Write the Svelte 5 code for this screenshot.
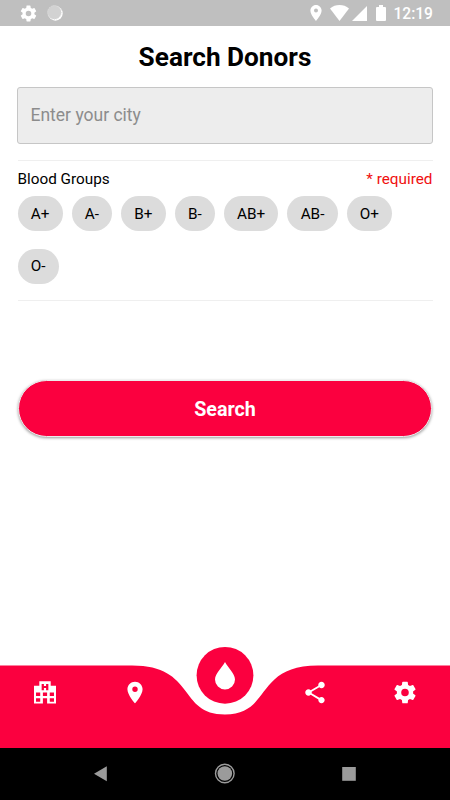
<script lang="ts">
	const gearPath =
		'M12 15.5A3.5 3.5 0 0 1 8.5 12 3.5 3.5 0 0 1 12 8.5a3.5 3.5 0 0 1 3.5 3.5 3.5 3.5 0 0 1-3.5 3.5m7.43-2.53c.04-.32.07-.64.07-.97s-.03-.66-.07-1l2.11-1.63c.19-.15.24-.42.12-.64l-2-3.46c-.12-.22-.39-.31-.61-.22l-2.49 1c-.52-.39-1.06-.73-1.69-.98l-.37-2.65A.506.506 0 0 0 14 2h-4c-.25 0-.46.18-.5.42l-.37 2.65c-.63.25-1.17.59-1.69.98l-2.49-1c-.22-.09-.49 0-.61.22l-2 3.46c-.13.22-.07.49.12.64L4.57 11c-.04.34-.07.67-.07 1s.03.65.07.97l-2.11 1.66c-.19.15-.25.42-.12.64l2 3.46c.12.22.39.3.61.22l2.49-1.01c.52.4 1.06.74 1.69.99l.37 2.65c.04.24.25.42.5.42h4c.25 0 .46-.18.5-.42l.37-2.65c.63-.26 1.17-.59 1.69-.99l2.49 1.01c.22.08.49 0 .61-.22l2-3.46c.12-.22.07-.49-.12-.64z';
	const pinPath =
		'M12 2C8.13 2 5 5.13 5 9c0 5.25 7 13 7 13s7-7.75 7-13c0-3.87-3.13-7-7-7zm0 9.5a2.5 2.5 0 0 1 0-5 2.5 2.5 0 0 1 0 5z';

	// Empty path leaves room for the floating middle button
	const tabs = [
		{
			label: 'Hospitals',
			path: 'M6.75 1.7h10.5v4h4.9v16.5h-8.2v-5h-3.9v5h-8.2V5.7h4.9zM8.9 4.1v5.8H11v-2h2v2h2.1V4.1H13v2h-2v-2zM3.7 12v3.2h3.9V12zm6.35 0v3.2h3.9V12zm6.35 0v3.2h3.9V12zM3.7 17.2v3.3h3.9v-3.3zm12.7 0v3.3h3.9v-3.3z'
		},
		{ label: 'Nearby', path: pinPath },
		{ label: 'Donors', path: '' },
		{
			label: 'Share',
			path: 'M18 16.08c-.76 0-1.44.3-1.96.77L8.91 12.7c.05-.23.09-.46.09-.7s-.04-.47-.09-.7l7.05-4.11c.54.5 1.25.81 2.04.81 1.66 0 3-1.34 3-3s-1.34-3-3-3-3 1.34-3 3c0 .24.04.47.09.7L8.04 9.81C7.5 9.31 6.79 9 6 9c-1.66 0-3 1.34-3 3s1.34 3 3 3c.79 0 1.5-.31 2.04-.81l7.12 4.16c-.05.21-.08.43-.08.65 0 1.61 1.31 2.92 2.92 2.92s2.92-1.31 2.92-2.92-1.31-2.92-2.92-2.92z'
		},
		{ label: 'Settings', path: gearPath }
	];

	const bloodGroups = ['A+', 'A-', 'B+', 'B-', 'AB+', 'AB-', 'O+', 'O-'];

	let city = $state('');
	let selected = $state('');
</script>

<div class="screen">
	<header class="status-bar">
		<div class="status-left">
			<svg class="status-gear" viewBox="0 0 24 24"><path d={gearPath} /></svg>
			<svg class="status-sync" viewBox="0 0 16 16">
				<circle cx="8.4" cy="8.4" r="7.3" />
				<circle class="disc" cx="7.4" cy="7.4" r="6.8" />
			</svg>
		</div>
		<div class="status-right">
			<svg class="status-pin" viewBox="5 2 14 20"><path d={pinPath} /></svg>
			<svg class="status-wifi" viewBox="0 0 19 16"><path d="M0 3.5C5.3-1.1 13.7-1.1 19 3.5L9.5 16z" /></svg>
			<svg class="status-signal" viewBox="0 0 15 15"><path d="M15 0v15H0z" /></svg>
			<svg class="status-battery" viewBox="0 0 10 16">
				<path d="M3 0h4v2h2a1 1 0 0 1 1 1v12a1 1 0 0 1-1 1H1a1 1 0 0 1-1-1V3a1 1 0 0 1 1-1h2z" />
			</svg>
			<span class="clock">12:19</span>
		</div>
	</header>

	<main>
		<h1>Search Donors</h1>
		<input class="city" type="text" placeholder="Enter your city" bind:value={city} />

		<section class="groups">
			<div class="groups-head">
				<span>Blood Groups</span>
				<span class="required">* required</span>
			</div>
			<div class="chips">
				{#each bloodGroups as group}
					<button class="chip" class:active={selected === group} onclick={() => (selected = group)}>
						{group}
					</button>
				{/each}
			</div>
		</section>

		<button class="search">Search</button>
	</main>

	<nav class="tab-bar">
		<svg class="wave" viewBox="0 0 450 108">
			<path
				class="wave-fill"
				d="M0 25.5H132C196 25.5 178 74.5 225 74.5S254 25.5 318 25.5H450V108H0z"
			/>
			<circle class="wave-fill" cx="225" cy="35.3" r="28.4" />
			<path class="drop" d="M225 22C222.5 27 215 33.5 215 39.5a10 10 0 0 0 20 0C235 33.5 227.5 27 225 22z" />
		</svg>
		<div class="tabs">
			{#each tabs as tab}
				<button class="tab" aria-label={tab.label}>
					{#if tab.path}
						<svg viewBox="0 0 24 24"><path d={tab.path} /></svg>
					{/if}
				</button>
			{/each}
		</div>
	</nav>

	<footer class="system-bar">
		<svg viewBox="0 0 450 52">
			<path d="M94 25.8L106.8 18.3V33.3z" />
			<circle class="ring" cx="224.8" cy="25.5" r="9.3" />
			<circle cx="224.8" cy="25.5" r="7.3" />
			<rect x="342.2" y="19" width="13.6" height="13.8" />
		</svg>
	</footer>
</div>

<style>
	:global(body) {
		margin: 0;
		background: #fff;
	}

	.screen {
		display: flex;
		flex-direction: column;
		width: 450px;
		height: 800px;
		overflow: hidden;
		background: #fff;
		color: #000;
		font-family: Roboto, sans-serif;
	}

	button,
	input {
		box-sizing: border-box;
		margin: 0;
		font-family: inherit;
	}

	svg {
		display: block;
	}

	.status-bar {
		display: flex;
		justify-content: space-between;
		align-items: center;
		flex: none;
		box-sizing: border-box;
		height: 26px;
		padding: 0 17px 0 19px;
		background: #bfbfbf;
		fill: #fff;
	}

	.status-left,
	.status-right {
		display: flex;
		align-items: center;
	}

	.status-left {
		gap: 9px;
	}

	.status-gear {
		width: 19px;
		height: 19px;
	}

	.status-sync {
		width: 16px;
		height: 16px;
	}

	.disc {
		fill: #d2d2d2;
		stroke: #dedede;
		stroke-width: 1;
		stroke-dasharray: 1 1;
	}

	.status-pin {
		width: 12px;
		height: 16px;
		margin-right: 8px;
	}

	.status-wifi {
		width: 19px;
		height: 16px;
		margin-right: 3px;
	}

	.status-signal {
		width: 15px;
		height: 15px;
		margin-right: 9px;
	}

	.status-battery {
		width: 10px;
		height: 16px;
		margin-right: 7px;
	}

	.clock {
		padding-top: 2px;
		color: #fff;
		font-size: 15.6px;
		font-weight: 500;
		line-height: 18px;
	}

	main {
		display: flex;
		flex: 1;
		flex-direction: column;
		padding: 0 17px;
	}

	h1 {
		margin: 15px 0 14px;
		font-size: 26.2px;
		font-weight: 700;
		line-height: 32px;
		text-align: center;
	}

	.city {
		width: 416px;
		height: 57px;
		padding: 0 13px 2px 12.5px;
		border: 1px solid #c6c6c6;
		border-radius: 3px;
		outline: none;
		background: #ededed;
		font-size: 17.5px;
	}

	.city::placeholder {
		color: #8c8c8c;
		opacity: 1;
	}

	.groups {
		margin: 16px 0.5px 0;
		padding: 8px 0 16px;
		border: solid #efefef;
		border-width: 1px 0;
	}

	.groups-head {
		display: flex;
		justify-content: space-between;
		padding-top: 1px;
		font-size: 15.3px;
		line-height: 18px;
	}

	.required {
		color: #f00f0f;
	}

	.chips {
		display: flex;
		flex-wrap: wrap;
		gap: 17.5px 9px;
		margin-top: 8px;
	}

	.chip {
		height: 35px;
		padding: 0 13.2px;
		border: 0;
		border-radius: 18px;
		background: #dcdcdc;
		color: #000;
		font-size: 15.3px;
	}

	.chip.active {
		background: #fb003f;
		color: #fff;
	}

	.search {
		width: 414px;
		height: 57px;
		margin: 79px 1px 0;
		padding: 2px 0 0;
		border: 1px solid #ececec;
		border-radius: 29px;
		background: #fb003f;
		box-shadow: 0 1px 3px rgba(0, 0, 0, 0.4);
		color: #fff;
		font-size: 19.7px;
		font-weight: 700;
	}

	.tab-bar {
		display: grid;
		flex: none;
		height: 108px;
	}

	.wave,
	.tabs {
		grid-area: 1 / 1;
	}

	.wave {
		width: 450px;
		height: 108px;
	}

	.wave-fill {
		fill: #fb003f;
	}

	.drop {
		fill: #fff;
	}

	.tabs {
		display: grid;
		grid-template-columns: repeat(5, 1fr);
		height: 27px;
		padding-top: 39px;
	}

	.tab {
		display: flex;
		justify-content: center;
		padding: 0;
		border: 0;
		background: none;
	}

	.tab svg {
		width: 26px;
		height: 27px;
		fill: #fff;
	}

	.system-bar {
		flex: none;
		height: 52px;
		background: #000;
		fill: #9b9b9b;
	}

	.ring {
		fill: none;
		stroke: #9b9b9b;
		stroke-width: 1.4;
	}
</style>
